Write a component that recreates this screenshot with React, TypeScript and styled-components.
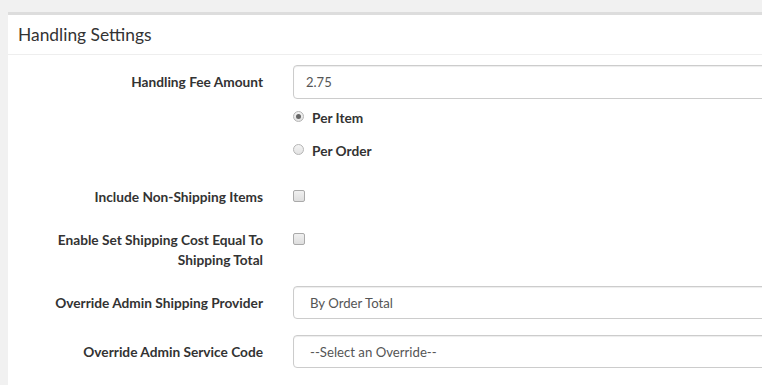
import styled, { createGlobalStyle } from "styled-components";

const GlobalStyle = createGlobalStyle`
  html, body {
    margin: 0;
    padding: 0;
    background: #f1f1f1;
    overflow: hidden;
  }
  body {
    font-family: Lato, "Open Sans", sans-serif;
    color: #333;
  }
`;

const Page = styled.div`
  padding: 12px 0 0 8px;
`;

const Panel = styled.section`
  width: 1000px;
  min-height: 400px;
  background: #fff;
  border-top: 3px solid #ddd;
`;

const PanelHeader = styled.h3`
  margin: 0;
  height: 40px;
  box-sizing: border-box;
  padding: 9px 10px 0;
  font-size: 17.4px;
  font-weight: 400;
  line-height: 22px;
  color: #333;
  border-bottom: 1px solid #eee;
`;

const PanelBody = styled.div`
  padding: 10px 0 0;
  display: flex;
  flex-direction: column;
  gap: 16px;
`;

const Row = styled.div<{ $extra?: number }>`
  display: flex;
  align-items: flex-start;
  padding-bottom: ${(p) => p.$extra ?? 0}px;
`;

const Label = styled.label`
  width: 255px;
  flex: none;
  box-sizing: border-box;
  padding: 7px 0 0 40px;
  text-align: right;
  font-size: 13.7px;
  font-weight: 700;
  line-height: 20px;
  color: #333;
`;

const Control = styled.div<{ $top?: number }>`
  margin-left: 30px;
  padding-top: ${(p) => p.$top ?? 0}px;
  display: flex;
  flex-direction: column;
`;

const TextInput = styled.input`
  width: 600px;
  height: 34px;
  box-sizing: border-box;
  padding: 6px 12px;
  border: 1px solid #ccc;
  border-radius: 4px;
  box-shadow: inset 0 1px 1px rgba(0, 0, 0, 0.075);
  font-family: Lato, "Open Sans", sans-serif;
  font-size: 13px;
  color: #555;
  outline: none;
`;

const Select = styled.select`
  appearance: none;
  width: 600px;
  height: 33px;
  box-sizing: border-box;
  padding: 0 16px;
  border: 1px solid #ccc;
  border-radius: 4px;
  box-shadow: inset 0 1px 1px rgba(0, 0, 0, 0.075);
  background: #fff;
  font-family: Lato, "Open Sans", sans-serif;
  font-size: 13.2px;
  color: #555;
  outline: none;
`;

const RadioList = styled.div`
  display: flex;
  flex-direction: column;
  gap: 13px;
  margin-top: 8px;
`;

const RadioLabel = styled.label`
  display: flex;
  align-items: center;
  gap: 8px;
  height: 20px;
  font-size: 13.7px;
  font-weight: 700;
  color: #333;
`;

const RadioDot = styled.span<{ $on?: boolean }>`
  position: relative;
  width: 11px;
  height: 11px;
  box-sizing: border-box;
  border-radius: 50%;
  border: 1px solid #b5b5b5;
  background: linear-gradient(#f4f4f4, #e2e2e2);
  margin-top: -1px;

  &::after {
    content: "";
    display: ${(p) => (p.$on ? "block" : "none")};
    position: absolute;
    left: 2px;
    top: 2px;
    width: 5px;
    height: 5px;
    border-radius: 50%;
    background: #666;
  }
`;

const CheckBox = styled.span`
  display: block;
  width: 12px;
  height: 12px;
  box-sizing: border-box;
  border: 1px solid #aaa;
  border-radius: 2px;
  background: linear-gradient(#f0f0f0, #dedede);
`;

export default function App() {
  return (
    <>
      <GlobalStyle />
      <Page>
        <Panel>
          <PanelHeader>Handling Settings</PanelHeader>
          <PanelBody>
            <Row $extra={4}>
              <Label>Handling Fee Amount</Label>
              <Control>
                <TextInput defaultValue="2.75" />
                <RadioList>
                  <RadioLabel>
                    <RadioDot $on />
                    Per Item
                  </RadioLabel>
                  <RadioLabel>
                    <RadioDot />
                    Per Order
                  </RadioLabel>
                </RadioList>
              </Control>
            </Row>
            <Row>
              <Label>Include Non-Shipping Items</Label>
              <Control $top={10}>
                <CheckBox />
              </Control>
            </Row>
            <Row>
              <Label>Enable Set Shipping Cost Equal To Shipping Total</Label>
              <Control $top={10}>
                <CheckBox />
              </Control>
            </Row>
            <Row>
              <Label>Override Admin Shipping Provider</Label>
              <Control>
                <Select defaultValue="total">
                  <option value="total">By Order Total</option>
                </Select>
              </Control>
            </Row>
            <Row>
              <Label>Override Admin Service Code</Label>
              <Control>
                <Select defaultValue="">
                  <option value="">--Select an Override--</option>
                </Select>
              </Control>
            </Row>
          </PanelBody>
        </Panel>
      </Page>
    </>
  );
}
